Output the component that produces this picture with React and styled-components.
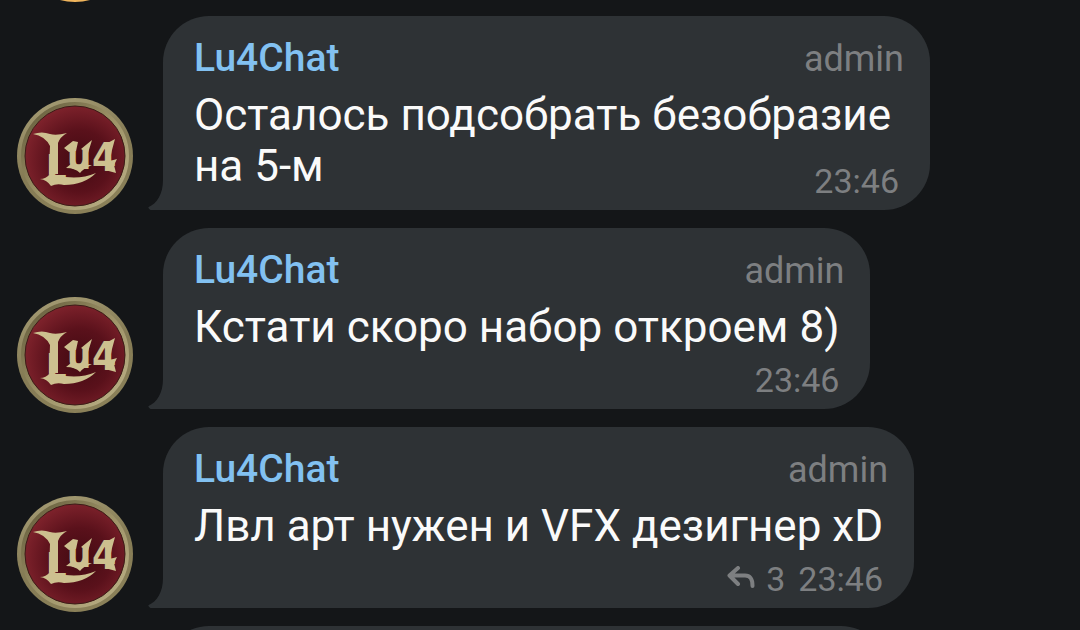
import styled, { createGlobalStyle } from 'styled-components'

const messages = [
    { id: 1, author: 'Lu4Chat', role: 'admin', text: 'Осталось подсобрать безобразие на 5-м', time: '23:46', inlineMeta: true },
    { id: 2, author: 'Lu4Chat', role: 'admin', text: 'Кстати скоро набор откроем 8)', time: '23:46' },
    { id: 3, author: 'Lu4Chat', role: 'admin', text: 'Лвл арт нужен и VFX дезигнер xD', time: '23:46', replies: 3 },
]

export default function App() {
    return (
        <>
            <GlobalStyle />
            <Chat>
                <MessageList>
                    <Row>
                        <PlainAvatar />
                    </Row>
                    {messages.map(message => <Message key={message.id} {...message} />)}
                    <Row>
                        <Spacer />
                        <NextBubble />
                    </Row>
                </MessageList>
            </Chat>
        </>
    )
}

function Message({ author, role, text, time, replies, inlineMeta }) {
    return (
        <Row>
            <ClanAvatar />
            <Bubble>
                <Tail viewBox="0 0 16 30" aria-hidden="true">
                    <path d="M15 0H16V30H2.500Q0.500 29 0.300 27.300C9 23.500 15 14 15 0Z" />
                </Tail>
                <Header>
                    <Author>{author}</Author>
                    <Role>{role}</Role>
                </Header>
                <Body>
                    <Text $inline={inlineMeta}>{text}</Text>
                    <Meta>
                        {replies && (
                            <Replies>
                                <ReplyIcon viewBox="0 0 28 24" aria-hidden="true">
                                    <path d="M11 2L2.500 9.500L11 18M3 9.500H18C23.500 9.500 25.500 13 25.500 20" />
                                </ReplyIcon>
                                <span>{replies}</span>
                            </Replies>
                        )}
                        <time>{time}</time>
                    </Meta>
                </Body>
            </Bubble>
        </Row>
    )
}

function ClanAvatar() {
    return (
        <Avatar viewBox="0 0 116 116" role="img" aria-label="Lu4">
            <defs>
                <linearGradient id="rim" x1="0.3" y1="0" x2="0.7" y2="1">
                    <stop offset="0" stopColor="#a39a72" />
                    <stop offset="0.5" stopColor="#857b55" />
                    <stop offset="1" stopColor="#8b8159" />
                </linearGradient>
                <linearGradient id="bevel" x1="0" y1="0" x2="1" y2="1">
                    <stop offset="0" stopColor="#5f5838" />
                    <stop offset="0.5" stopColor="#9d9267" />
                    <stop offset="1" stopColor="#bdb288" />
                </linearGradient>
                <radialGradient id="field" cx="0.55" cy="0.55" r="0.62">
                    <stop offset="0" stopColor="#430a12" />
                    <stop offset="0.5" stopColor="#5a111b" />
                    <stop offset="1" stopColor="#86262f" />
                </radialGradient>
            </defs>
            <circle cx="58" cy="58" r="58" fill="url(#rim)" />
            <circle cx="58" cy="58" r="52" fill="none" stroke="url(#bevel)" strokeWidth="4" />
            <circle cx="58" cy="58" r="50" fill="url(#field)" stroke="#3c1c17" strokeWidth="1" />
            <g fill="#cdc08f">
                <LogoText x="29" y="82" fontSize="36">L</LogoText>
                <LogoText x="50" y="71" fontSize="38">u</LogoText>
                <LogoText x="75" y="73" fontSize="39">4</LogoText>
                {/* horn, swoosh and spurs around the lettering */}
                <path d="M16 36Q25 33 33 36Q39 38 50 35Q43 39 41 45V76H32L33 48Q28 38 16 36Z" />
                <path d="M23 81Q29 81 33 76L40 77Q60 83 79 75Q67 87 47 87Q40 85 34 88Q30 82 23 81Z" />
                <path d="M47 50L56 43L61 44L59 53L52 54ZM64 51L75 42L71 55Z" />
                <path d="M49 70L54 66L70 67L75 67Q67 70 63 75Q58 70 49 70Z" />
                <path d="M85 48L98 41L95 52L94 57ZM93 63L100 61L97 67L99 75L88 72Z" />
            </g>
        </Avatar>
    )
}

const GlobalStyle = createGlobalStyle`
    *{
        box-sizing: border-box;
    }
    body{
        margin: 0;
        background-color: #141618;
        color: #fafafa;
        font-family: Roboto, 'Liberation Sans', sans-serif;
    }
`
const Chat = styled.main`
    height: 100vh;
    overflow: hidden;
`
/* the list is scrolled so that only the edge of the previous avatar shows */
const MessageList = styled.div`
    display: flex;
    flex-direction: column;
    gap: 18px;
    margin-top: -114px;
    padding: 0 150px 0 17px;
`
const Row = styled.article`
    display: flex;
    align-items: flex-end;
    gap: 30px;
`
const Avatar = styled.svg`
    flex: none;
    width: 116px;
    height: 116px;
    margin-bottom: -4px;
`
const PlainAvatar = styled.div`
    width: 116px;
    height: 116px;
    margin-bottom: -4px;
    border-radius: 50%;
    background-color: #efb45c;
`
const LogoText = styled.text`
    font-family: 'DejaVu Sans Condensed', 'DejaVu Sans', sans-serif;
    font-weight: 700;
`
const Spacer = styled.div`
    flex: none;
    width: 116px;
`
const Bubble = styled.div`
    position: relative;
    min-width: 0;
    padding: 21px 26px 9px 31px;
    border-radius: 46px 46px 46px 0;
    background-color: #2e3235;
`
const NextBubble = styled(Bubble)`
    flex: 0 1 724px;
    height: 180px;
`
const Tail = styled.svg`
    position: absolute;
    left: -15px;
    bottom: 0;
    width: 16px;
    height: 30px;
    fill: #2e3235;
`
const Header = styled.header`
    display: flex;
    justify-content: space-between;
    align-items: baseline;
    line-height: 43px;
`
const Author = styled.span`
    color: #82c1f1;
    font-size: 39px;
    font-weight: 500;
`
const Role = styled.span`
    color: #7d7f81;
    font-size: 36px;
`
const Body = styled.div`
    display: grid;
    margin: 9px 5px 0 0;
`
const Text = styled.p`
    grid-area: 1 / 1;
    margin: 0;
    padding-bottom: ${({ $inline }) => $inline ? '9px' : '47px'};
    font-size: 44px;
    line-height: 51px;
`
const Meta = styled.div`
    grid-area: 1 / 1;
    place-self: end;
    display: flex;
    gap: 13px;
    color: #7d7f81;
    font-size: 34px;
    line-height: 40px;
`
const Replies = styled.span`
    display: flex;
    gap: 11px;
`
const ReplyIcon = styled.svg`
    width: 28px;
    height: 24px;
    margin-top: 7px;
    fill: none;
    stroke: currentColor;
    stroke-width: 4;
    stroke-linecap: round;
    stroke-linejoin: round;
`
